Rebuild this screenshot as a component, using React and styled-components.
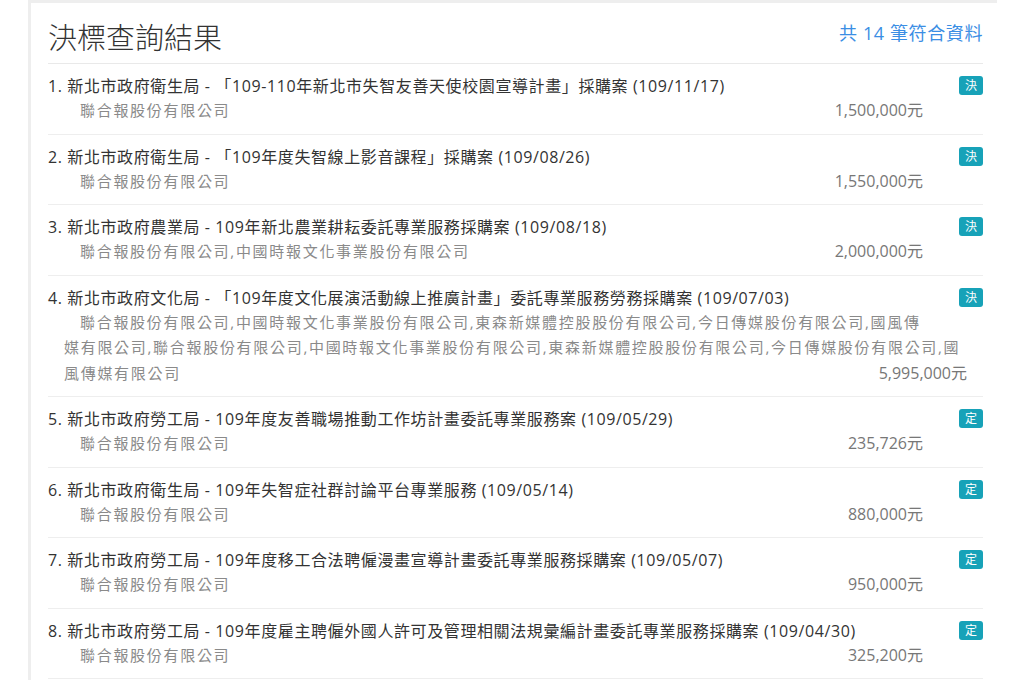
import React from 'react';
import styled, { createGlobalStyle } from 'styled-components';

const GlobalStyle = createGlobalStyle`
	html, body {
		margin: 0;
		padding: 0;
		background: #fff;
	}

	body {
		font-family: 'Open Sans', 'Noto Sans CJK TC', sans-serif;
		color: #333;
	}
`;

const Card = styled.div`
	margin-left: 28px;
	width: 969px;
	min-height: 100vh;
	box-sizing: border-box;
	border-top: 3px solid #eeeeee;
	border-left: 3px solid #eeeeee;
	padding: 0 14px 0 17px;
`;

const Header = styled.div`
	display: flex;
	justify-content: space-between;
	align-items: flex-start;
	padding-top: 18px;
	padding-bottom: 8px;
	border-bottom: 1px solid #e9e9e9;

	h1 {
		margin: 0;
		font-size: 29px;
		font-weight: 300;
		line-height: 34px;
		color: #333;
	}

	.count {
		font-size: 18px;
		line-height: 24px;
		letter-spacing: 0.6px;
		color: #3b8ee4;
	}
`;

const Row = styled.div`
	display: flow-root;
	padding: 10px 0;
	border-bottom: 1px solid #eeeeee;
`;

const Badge = styled.span`
	float: right;
	width: 24px;
	height: 19px;
	margin: 2px 0 10px 36px;
	border-radius: 3px;
	background: #17a2b8;
	color: #fff;
	font-size: 12px;
	line-height: 19px;
	text-align: center;
`;

const Title = styled.div`
	font-size: 16px;
	line-height: 24px;
	letter-spacing: 0.6px;
	color: #333;
`;

const Company = styled.div`
	margin: 0 16px;
	text-indent: 16px;
	font-size: 15px;
	line-height: 25.5px;
	letter-spacing: 1.7px;
	color: #8a8a8a;
`;

const Amount = styled.span`
	float: right;
	text-indent: 0;
	letter-spacing: 0;
	font-size: 16px;
	color: #777;
`;

const results = [
	{
		title: '新北市政府衛生局 - 「109-110年新北市失智友善天使校園宣導計畫」採購案 (109/11/17)',
		company: '聯合報股份有限公司',
		amount: '1,500,000元',
		badge: '決',
	},
	{
		title: '新北市政府衛生局 - 「109年度失智線上影音課程」採購案 (109/08/26)',
		company: '聯合報股份有限公司',
		amount: '1,550,000元',
		badge: '決',
	},
	{
		title: '新北市政府農業局 - 109年新北農業耕耘委託專業服務採購案 (109/08/18)',
		company: '聯合報股份有限公司,中國時報文化事業股份有限公司',
		amount: '2,000,000元',
		badge: '決',
	},
	{
		title: '新北市政府文化局 - 「109年度文化展演活動線上推廣計畫」委託專業服務勞務採購案 (109/07/03)',
		company:
			'聯合報股份有限公司,中國時報文化事業股份有限公司,東森新媒體控股股份有限公司,今日傳媒股份有限公司,國風傳媒有限公司,聯合報股份有限公司,中國時報文化事業股份有限公司,東森新媒體控股股份有限公司,今日傳媒股份有限公司,國風傳媒有限公司',
		amount: '5,995,000元',
		badge: '決',
	},
	{
		title: '新北市政府勞工局 - 109年度友善職場推動工作坊計畫委託專業服務案 (109/05/29)',
		company: '聯合報股份有限公司',
		amount: '235,726元',
		badge: '定',
	},
	{
		title: '新北市政府衛生局 - 109年失智症社群討論平台專業服務 (109/05/14)',
		company: '聯合報股份有限公司',
		amount: '880,000元',
		badge: '定',
	},
	{
		title: '新北市政府勞工局 - 109年度移工合法聘僱漫畫宣導計畫委託專業服務採購案 (109/05/07)',
		company: '聯合報股份有限公司',
		amount: '950,000元',
		badge: '定',
	},
	{
		title: '新北市政府勞工局 - 109年度雇主聘僱外國人許可及管理相關法規彙編計畫委託專業服務採購案 (109/04/30)',
		company: '聯合報股份有限公司',
		amount: '325,200元',
		badge: '定',
	},
];

const App = () => {
	return (
		<>
			<GlobalStyle />
			<Card>
				<Header>
					<h1>決標查詢結果</h1>
					<span className='count'>共 14 筆符合資料</span>
				</Header>
				{results.map((item, i) => (
					<Row key={i}>
						<Badge>{item.badge}</Badge>
						<Title>
							{i + 1}. {item.title}
						</Title>
						<Company>
							{item.company}
							<Amount>{item.amount}</Amount>
						</Company>
					</Row>
				))}
			</Card>
		</>
	);
};

export default App;
